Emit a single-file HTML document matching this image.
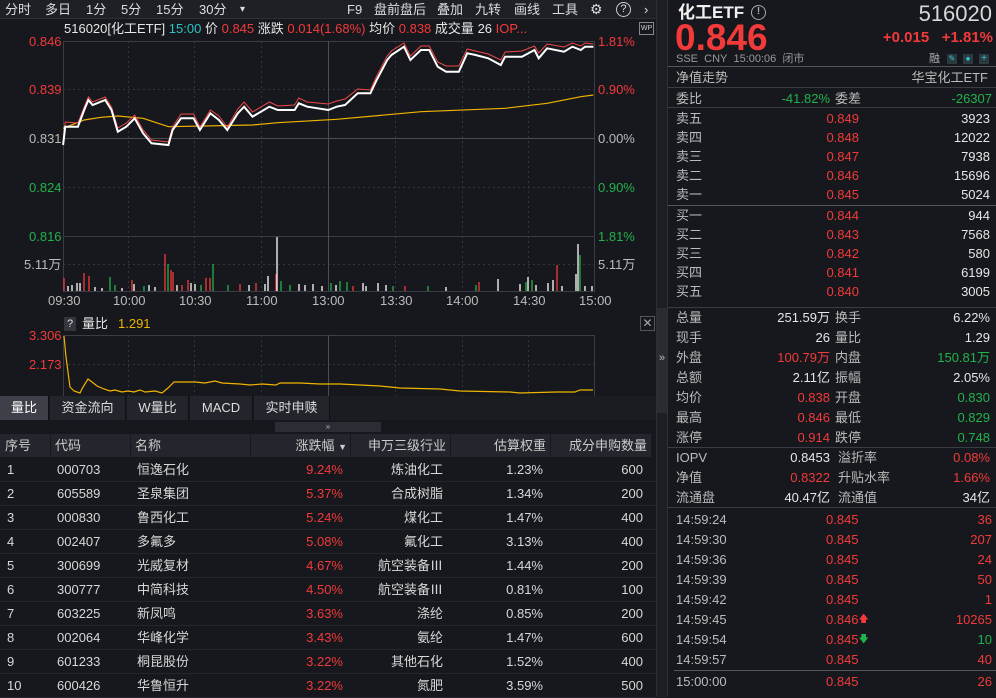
<!DOCTYPE html>
<html><head><meta charset="utf-8">
<style>
*{margin:0;padding:0;box-sizing:border-box}
body{width:996px;height:697px;background:#16181d;font-family:"Liberation Sans","Noto Sans CJK SC",sans-serif;color:#d8d8d8;font-size:13px;line-height:16px;position:relative;overflow:hidden}
.a{position:absolute;white-space:nowrap;line-height:16px}
.r{color:#f23a3a}.g{color:#22b24c}.y{color:#f0b400}.c{color:#2ec4c4}.w{color:#e6e6e6}.gr{color:#bbb}
.top span{position:absolute;top:0;height:19px;line-height:19px;font-size:13px;color:#ddd}
.tab{position:absolute;top:396px;height:24px;line-height:24px;text-align:center;background:#22252b;border-right:1px solid #111;color:#ddd;font-size:13px}
.th{position:absolute;top:434px;height:23px;line-height:23px;color:#ccc;background:#23262c}
.row{position:absolute;left:0;width:656px;height:24px;border-bottom:1px solid #23262c}
.row span{position:absolute;top:0;line-height:24px}
.rp span{position:absolute;line-height:16px;height:16px;white-space:nowrap}
.hl{position:absolute;height:1px;background:#3a3d44}
</style></head><body>
<div class="a" style="left:0;top:0;width:660px;height:19px;background:#1e2026;border-bottom:1px solid #2c2f36"></div>
<div class="top">
<span style="left:5px">分时</span><span style="left:45px">多日</span><span style="left:86px">1分</span><span style="left:121px">5分</span><span style="left:156px">15分</span><span style="left:199px">30分</span><span style="left:240px;font-size:10px">▾</span>
<span style="left:347px">F9</span><span style="left:374px">盘前盘后</span><span style="left:437px">叠加</span><span style="left:475px">九转</span><span style="left:514px">画线</span><span style="left:552px">工具</span>
<span style="left:590px;font-size:14px">⚙</span><span style="left:616px;width:15px;height:15px;top:2px;border:1px solid #ccc;border-radius:50%;line-height:13px;text-align:center;font-size:11px">?</span><span style="left:644px">›</span>
</div>
<div class="a" style="left:64px;top:21px;font-size:13px"><span class="w">516020[化工ETF]</span> <span class="c">15:00</span> <span class="w">价</span> <span class="r">0.845</span> <span class="w">涨跌</span> <span class="r">0.014(1.68%)</span> <span class="w">均价</span> <span class="r">0.838</span> <span class="w">成交量</span> <span class="w">26</span> <span class="r">IOP...</span></div>
<div class="a" style="left:639px;top:22px;width:15px;height:13px;border:1px solid #888;font-size:7px;color:#ccc;text-align:center;line-height:11px">WP</div>
<svg class="a" style="left:0;top:0" width="660" height="312">
<g stroke="#33363d" stroke-width="1" stroke-dasharray="2,3">
<line x1="63" y1="89.5" x2="595" y2="89.5"/><line x1="63" y1="187.5" x2="595" y2="187.5"/><line x1="63" y1="264.5" x2="595" y2="264.5"/>
<line x1="128.5" y1="41" x2="128.5" y2="291"/><line x1="194.5" y1="41" x2="194.5" y2="291"/><line x1="261.5" y1="41" x2="261.5" y2="291"/><line x1="395.5" y1="41" x2="395.5" y2="291"/><line x1="462.5" y1="41" x2="462.5" y2="291"/><line x1="528.5" y1="41" x2="528.5" y2="291"/>
</g>
<g stroke="#3a3d44" stroke-width="1" fill="none">
<rect x="63.5" y="41.5" width="531" height="250"/>
<line x1="63" y1="138.5" x2="595" y2="138.5" stroke="#4a4d55"/><line x1="63" y1="236.5" x2="595" y2="236.5"/>
<line x1="328.5" y1="41" x2="328.5" y2="291" stroke="#4a4d55"/>
</g>
<g stroke-width="1.3">
<line x1="64" y1="291" x2="64" y2="278" stroke="#f23a3a"/><line x1="68" y1="291" x2="68" y2="286" stroke="#fff"/><line x1="72" y1="291" x2="72" y2="285" stroke="#fff"/><line x1="77" y1="291" x2="77" y2="283" stroke="#fff"/><line x1="80" y1="291" x2="80" y2="283" stroke="#fff"/><line x1="84" y1="291" x2="84" y2="273" stroke="#f23a3a"/><line x1="89" y1="291" x2="89" y2="276" stroke="#f23a3a"/><line x1="95" y1="291" x2="95" y2="287" stroke="#fff"/><line x1="102" y1="291" x2="102" y2="288" stroke="#fff"/><line x1="110" y1="291" x2="110" y2="277" stroke="#22b24c"/><line x1="115" y1="291" x2="115" y2="285" stroke="#22b24c"/><line x1="122" y1="291" x2="122" y2="288" stroke="#fff"/><line x1="132" y1="291" x2="132" y2="280" stroke="#f23a3a"/><line x1="134" y1="291" x2="134" y2="284" stroke="#fff"/><line x1="144" y1="291" x2="144" y2="286" stroke="#22b24c"/><line x1="149" y1="291" x2="149" y2="285" stroke="#fff"/><line x1="155" y1="291" x2="155" y2="287" stroke="#fff"/>
<line x1="165" y1="291" x2="165" y2="254" stroke="#f23a3a"/><line x1="168" y1="291" x2="168" y2="264" stroke="#22b24c"/><line x1="171" y1="291" x2="171" y2="270" stroke="#f23a3a"/><line x1="173" y1="291" x2="173" y2="272" stroke="#f23a3a"/><line x1="177" y1="291" x2="177" y2="285" stroke="#fff"/><line x1="182" y1="291" x2="182" y2="285" stroke="#f23a3a"/><line x1="188" y1="291" x2="188" y2="280" stroke="#f23a3a"/><line x1="191" y1="291" x2="191" y2="283" stroke="#fff"/><line x1="195" y1="291" x2="195" y2="284" stroke="#fff"/><line x1="201" y1="291" x2="201" y2="285" stroke="#22b24c"/><line x1="206" y1="291" x2="206" y2="278" stroke="#f23a3a"/><line x1="210" y1="291" x2="210" y2="278" stroke="#f23a3a"/><line x1="213" y1="291" x2="213" y2="264" stroke="#22b24c"/><line x1="228" y1="291" x2="228" y2="285" stroke="#22b24c"/><line x1="240" y1="291" x2="240" y2="284" stroke="#f23a3a"/><line x1="249" y1="291" x2="249" y2="285" stroke="#fff"/><line x1="256" y1="291" x2="256" y2="283" stroke="#f23a3a"/><line x1="265" y1="291" x2="265" y2="284" stroke="#fff"/><line x1="268" y1="291" x2="268" y2="276" stroke="#fff"/><line x1="276" y1="291" x2="276" y2="274" stroke="#f23a3a"/><line x1="277" y1="291" x2="277" y2="237" stroke="#fff"/>
<line x1="281" y1="291" x2="281" y2="281" stroke="#22b24c"/><line x1="290" y1="291" x2="290" y2="285" stroke="#22b24c"/><line x1="299" y1="291" x2="299" y2="284" stroke="#fff"/><line x1="305" y1="291" x2="305" y2="285" stroke="#fff"/><line x1="313" y1="291" x2="313" y2="284" stroke="#fff"/><line x1="322" y1="291" x2="322" y2="286" stroke="#fff"/><line x1="331" y1="291" x2="331" y2="283" stroke="#22b24c"/><line x1="336" y1="291" x2="336" y2="285" stroke="#fff"/><line x1="340" y1="291" x2="340" y2="281" stroke="#22b24c"/><line x1="347" y1="291" x2="347" y2="282" stroke="#22b24c"/><line x1="353" y1="291" x2="353" y2="286" stroke="#f23a3a"/><line x1="363" y1="291" x2="363" y2="283" stroke="#fff"/><line x1="366" y1="291" x2="366" y2="286" stroke="#fff"/><line x1="378" y1="291" x2="378" y2="283" stroke="#fff"/><line x1="386" y1="291" x2="386" y2="285" stroke="#fff"/><line x1="393" y1="291" x2="393" y2="286" stroke="#22b24c"/><line x1="405" y1="291" x2="405" y2="286" stroke="#f23a3a"/><line x1="428" y1="291" x2="428" y2="286" stroke="#22b24c"/><line x1="446" y1="291" x2="446" y2="287" stroke="#fff"/><line x1="476" y1="291" x2="476" y2="285" stroke="#22b24c"/><line x1="479" y1="291" x2="479" y2="282" stroke="#f23a3a"/><line x1="498" y1="291" x2="498" y2="279" stroke="#fff"/><line x1="520" y1="291" x2="520" y2="284" stroke="#fff"/><line x1="526" y1="291" x2="526" y2="282" stroke="#22b24c"/><line x1="528" y1="291" x2="528" y2="277" stroke="#fff"/><line x1="532" y1="291" x2="532" y2="280" stroke="#22b24c"/><line x1="536" y1="291" x2="536" y2="285" stroke="#fff"/><line x1="548" y1="291" x2="548" y2="283" stroke="#fff"/><line x1="553" y1="291" x2="553" y2="280" stroke="#fff"/><line x1="557" y1="291" x2="557" y2="265" stroke="#f23a3a"/><line x1="562" y1="291" x2="562" y2="286" stroke="#fff"/><line x1="576" y1="291" x2="576" y2="274" stroke="#fff"/><line x1="578" y1="291" x2="578" y2="244" stroke="#fff"/><line x1="580" y1="291" x2="580" y2="255" stroke="#22b24c"/><line x1="585" y1="291" x2="585" y2="286" stroke="#fff"/><line x1="592" y1="291" x2="592" y2="286" stroke="#fff"/>
</g>
<polyline fill="none" stroke="#f0b400" stroke-width="1.2" points="63,128.3 84.2,120 101,117.3 117.8,116 143.1,118.3 168.4,126.7 252.5,125 277.8,122.7 336.7,119.3 420.9,111.7 505,108.3 547.1,103.3 580.8,96.7 593.4,95"/>
<polyline fill="none" stroke="#f04848" stroke-width="1" points="63,143 65.2,122 77.9,123 84.2,107 88.4,97 92.6,102 105.2,97 111.5,107 117.8,128 126.3,123 134.7,115 143.1,130 151.5,140 168.4,142 172.6,127 181,114 193.6,114 199.9,127 210.4,110 218.9,116 227.3,127 237.8,109 244.1,102 252.5,112 269.4,102 277.8,106 294.6,105 298.8,98 307.2,102 328.3,104 336.7,101 345.1,99 357.7,89 370.4,90 376.7,76 387.2,56 391.4,51 404,43 410.4,56 420.9,46 429.3,46 437.7,62 446.1,66 458.8,66 467.2,49 475.6,51 488.2,54 500.8,60 505.1,52 521.9,51 534.5,46 538.7,53 547.1,44 564,47 572.4,43 580.8,46 585,43 593.4,44"/>
<polyline fill="none" stroke="#fff" stroke-width="2" points="63.1,145 65.2,126.7 77.9,126.7 84.2,110 88.4,100 92.6,105 105.2,100 111.5,110 117.8,131.7 126.3,126.7 134.7,118.3 143.1,133.3 151.5,143.3 168.4,145 172.6,130 181,118.3 193.6,118.3 199.9,130 210.4,113.3 218.9,120 227.3,130 237.8,113.3 244.1,106.7 252.5,116.7 269.4,106.7 277.8,110 294.6,110 298.8,103.3 307.2,106.7 328.3,110 336.7,106.7 345.1,105 357.7,93.3 370.4,93.3 376.7,80 387.2,60 391.4,55 404,46.7 410.4,60 420.9,50 429.3,50 437.7,66.7 446.1,71.7 458.8,71.7 467.2,53.3 475.6,55 488.2,58.3 500.8,65 505.1,56.7 521.9,56.7 534.5,50 538.7,58.3 547.1,48.3 564,51.7 572.4,46.7 580.8,50 585,46.7 593.4,46.7"/>
<line x1="0" y1="312.5" x2="660" y2="312.5" stroke="#2c2f36"/>
</svg>
<div class="a r" style="left:29px;top:34px">0.846</div>
<div class="a r" style="left:29px;top:82px">0.839</div>
<div class="a gr" style="left:29px;top:131px">0.831</div>
<div class="a g" style="left:29px;top:180px">0.824</div>
<div class="a g" style="left:29px;top:229px">0.816</div>
<div class="a gr" style="left:24px;top:257px">5.11万</div>
<div class="a r" style="left:598px;top:34px">1.81%</div>
<div class="a r" style="left:598px;top:82px">0.90%</div>
<div class="a gr" style="left:598px;top:131px">0.00%</div>
<div class="a g" style="left:598px;top:180px">0.90%</div>
<div class="a g" style="left:598px;top:229px">1.81%</div>
<div class="a gr" style="left:598px;top:257px">5.11万</div>
<div class="a gr" style="left:48px;top:293px">09:30</div><div class="a gr" style="left:113px;top:293px">10:00</div><div class="a gr" style="left:179px;top:293px">10:30</div><div class="a gr" style="left:246px;top:293px">11:00</div><div class="a gr" style="left:312px;top:293px">13:00</div><div class="a gr" style="left:380px;top:293px">13:30</div><div class="a gr" style="left:446px;top:293px">14:00</div><div class="a gr" style="left:513px;top:293px">14:30</div><div class="a gr" style="left:579px;top:293px">15:00</div>
<div class="a" style="left:64px;top:317px;width:12px;height:14px;background:#33363d;color:#ddd;font-size:11px;text-align:center;line-height:14px">?</div>
<div class="a w" style="left:82px;top:316px">量比</div><div class="a y" style="left:118px;top:316px">1.291</div>
<div class="a" style="left:640px;top:316px;width:15px;height:15px;border:1px solid #555;color:#aaa;font-size:12px;text-align:center;line-height:13px">✕</div>
<svg class="a" style="left:0;top:312px" width="660" height="84">
<g stroke="#33363d" stroke-dasharray="2,3"><line x1="63" y1="52.5" x2="595" y2="52.5"/><line x1="128.5" y1="23" x2="128.5" y2="84"/><line x1="194.5" y1="23" x2="194.5" y2="84"/><line x1="261.5" y1="23" x2="261.5" y2="84"/><line x1="395.5" y1="23" x2="395.5" y2="84"/><line x1="462.5" y1="23" x2="462.5" y2="84"/><line x1="528.5" y1="23" x2="528.5" y2="84"/></g>
<g stroke="#3a3d44" fill="none"><line x1="63" y1="23.5" x2="595" y2="23.5"/><line x1="63.5" y1="23" x2="63.5" y2="84"/><line x1="594.5" y1="23" x2="594.5" y2="84"/><line x1="328.5" y1="23" x2="328.5" y2="84" stroke="#4a4d55"/></g>
<polyline fill="none" stroke="#f0b400" stroke-width="1.2" points="64,24 66,45 70,75 74,79 80,81 83,75 88,67 92,70 97,74 104,77 110,79 115,78 122,80 128,79 134,80 140,78 145,80 155,79 162,81 168,76 174,70 182,70 195,70 205,71 215,69 222,71 240,72 250,73 262,72 276,73 280,71 300,71 320,72 340,72 360,73 380,74 400,76 440,77 460,79 510,80 520,81 556,80 575,80 580,78 593,78"/>
</svg>
<div class="a r" style="left:29px;top:328px">3.306</div>
<div class="a r" style="left:29px;top:357px">2.173</div>
<div class="tab" style="left:0;width:49px;background:#3d4048;color:#fff">量比</div>
<div class="tab" style="left:50px;width:76px">资金流向</div>
<div class="tab" style="left:127px;width:62px">W量比</div>
<div class="tab" style="left:190px;width:63px">MACD</div>
<div class="tab" style="left:254px;width:76px">实时申赎</div>
<div class="a" style="left:330px;top:396px;width:326px;height:24px;background:#1a1c21"></div>
<div class="a" style="left:275px;top:422px;width:106px;height:10px;background:#2a2d33;color:#bbb;font-size:8px;text-align:center;line-height:10px">»</div>
<div class="th" style="left:0;width:50px;padding-left:5px">序号</div>
<div class="th" style="left:51px;width:79px;padding-left:4px">代码</div>
<div class="th" style="left:131px;width:119px;padding-left:4px">名称</div>
<div class="th" style="left:251px;width:99px;text-align:right;padding-right:3px">涨跌幅 <span style="font-size:9px">▼</span></div>
<div class="th" style="left:351px;width:99px;text-align:right;padding-right:4px">申万三级行业</div>
<div class="th" style="left:451px;width:99px;text-align:right;padding-right:4px">估算权重</div>
<div class="th" style="left:551px;width:100px;text-align:right;padding-right:4px">成分申购数量</div>
<div class="row" style="top:458px"><span style="left:7px">1</span><span style="left:57px">000703</span><span style="left:137px">恒逸石化</span><span class="r" style="right:313px">9.24%</span><span style="right:213px">炼油化工</span><span style="right:113px">1.23%</span><span style="right:13px">600</span></div>
<div class="row" style="top:482px"><span style="left:7px">2</span><span style="left:57px">605589</span><span style="left:137px">圣泉集团</span><span class="r" style="right:313px">5.37%</span><span style="right:213px">合成树脂</span><span style="right:113px">1.34%</span><span style="right:13px">200</span></div>
<div class="row" style="top:506px"><span style="left:7px">3</span><span style="left:57px">000830</span><span style="left:137px">鲁西化工</span><span class="r" style="right:313px">5.24%</span><span style="right:213px">煤化工</span><span style="right:113px">1.47%</span><span style="right:13px">400</span></div>
<div class="row" style="top:530px"><span style="left:7px">4</span><span style="left:57px">002407</span><span style="left:137px">多氟多</span><span class="r" style="right:313px">5.08%</span><span style="right:213px">氟化工</span><span style="right:113px">3.13%</span><span style="right:13px">400</span></div>
<div class="row" style="top:554px"><span style="left:7px">5</span><span style="left:57px">300699</span><span style="left:137px">光威复材</span><span class="r" style="right:313px">4.67%</span><span style="right:213px">航空装备Ⅲ</span><span style="right:113px">1.44%</span><span style="right:13px">200</span></div>
<div class="row" style="top:578px"><span style="left:7px">6</span><span style="left:57px">300777</span><span style="left:137px">中简科技</span><span class="r" style="right:313px">4.50%</span><span style="right:213px">航空装备Ⅲ</span><span style="right:113px">0.81%</span><span style="right:13px">100</span></div>
<div class="row" style="top:602px"><span style="left:7px">7</span><span style="left:57px">603225</span><span style="left:137px">新凤鸣</span><span class="r" style="right:313px">3.63%</span><span style="right:213px">涤纶</span><span style="right:113px">0.85%</span><span style="right:13px">200</span></div>
<div class="row" style="top:626px"><span style="left:7px">8</span><span style="left:57px">002064</span><span style="left:137px">华峰化学</span><span class="r" style="right:313px">3.43%</span><span style="right:213px">氨纶</span><span style="right:113px">1.47%</span><span style="right:13px">600</span></div>
<div class="row" style="top:650px"><span style="left:7px">9</span><span style="left:57px">601233</span><span style="left:137px">桐昆股份</span><span class="r" style="right:313px">3.22%</span><span style="right:213px">其他石化</span><span style="right:113px">1.52%</span><span style="right:13px">400</span></div>
<div class="row" style="top:674px"><span style="left:7px">10</span><span style="left:57px">600426</span><span style="left:137px">华鲁恒升</span><span class="r" style="right:313px">3.22%</span><span style="right:213px">氮肥</span><span style="right:113px">3.59%</span><span style="right:13px">500</span></div>
<div class="a" style="left:656px;top:0;width:12px;height:697px;background:#1d1f24;border-left:1px solid #2c2f36;border-right:1px solid #2c2f36"></div>
<div class="a" style="left:657px;top:308px;width:10px;height:105px;background:#2a2c31;color:#bbb;font-size:11px;line-height:100px;text-align:center">»</div>
<div class="a" style="left:678px;top:3px;font-size:17px;line-height:20px;font-weight:bold;color:#f0f0f0">化工ETF</div>
<div class="a" style="left:751px;top:5px;width:15px;height:15px;border:1.5px solid #aaa;border-radius:50%;color:#aaa;font-size:10px;text-align:center;line-height:12px;font-weight:bold">!</div>
<div class="a" style="right:4px;top:2px;font-size:22px;line-height:24px;color:#d8d8d8">516020</div>
<div class="a r" style="left:675px;top:21px;font-size:37px;line-height:34px;font-weight:bold">0.846</div>
<div class="a r" style="right:3px;top:29px;font-size:15px;line-height:18px;font-weight:bold">+0.015&nbsp;&nbsp;&nbsp;+1.81%</div>
<div class="a" style="left:676px;top:52px;font-size:11px;line-height:14px;color:#999">SSE&nbsp;&nbsp;CNY&nbsp;&nbsp;15:00:06&nbsp;&nbsp;闭市</div>
<div class="a" style="left:929px;top:52px;font-size:11px;line-height:14px;color:#aaa">融</div>
<div class="a" style="left:947px;top:54px;width:10px;height:10px;background:#2a3a40;color:#3cc;font-size:8px;line-height:10px;text-align:center">✎</div>
<div class="a" style="left:963px;top:54px;width:10px;height:10px;background:#2a3a40;color:#3cc;font-size:8px;line-height:10px;text-align:center">●</div>
<div class="a" style="left:979px;top:54px;width:10px;height:10px;background:#2a3a40;color:#3cc;font-size:10px;line-height:10px;text-align:center">+</div>
<div class="hl" style="left:668px;top:66px;width:328px;background:#555"></div>
<div class="a gr" style="left:676px;top:70px">净值走势</div><div class="a gr" style="right:8px;top:70px">华宝化工ETF</div>
<div class="hl" style="left:668px;top:87px;width:328px"></div>
<div class="a gr" style="left:676px;top:91px">委比</div><div class="a g" style="right:166px;top:91px">-41.82%</div><div class="a gr" style="left:835px;top:91px">委差</div><div class="a g" style="right:4px;top:91px">-26307</div>
<div class="hl" style="left:668px;top:107px;width:328px"></div>
<div class="rp">
<span class="gr" style="left:676px;top:111px">卖五</span><span class="r" style="right:137px;top:111px">0.849</span><span class="w" style="right:6px;top:111px">3923</span>
<span class="gr" style="left:676px;top:130px">卖四</span><span class="r" style="right:137px;top:130px">0.848</span><span class="w" style="right:6px;top:130px">12022</span>
<span class="gr" style="left:676px;top:149px">卖三</span><span class="r" style="right:137px;top:149px">0.847</span><span class="w" style="right:6px;top:149px">7938</span>
<span class="gr" style="left:676px;top:168px">卖二</span><span class="r" style="right:137px;top:168px">0.846</span><span class="w" style="right:6px;top:168px">15696</span>
<span class="gr" style="left:676px;top:187px">卖一</span><span class="r" style="right:137px;top:187px">0.845</span><span class="w" style="right:6px;top:187px">5024</span>
</div>
<div class="hl" style="left:668px;top:205px;width:328px;background:#555"></div>
<div class="rp">
<span class="gr" style="left:676px;top:208px">买一</span><span class="r" style="right:137px;top:208px">0.844</span><span class="w" style="right:6px;top:208px">944</span>
<span class="gr" style="left:676px;top:227px">买二</span><span class="r" style="right:137px;top:227px">0.843</span><span class="w" style="right:6px;top:227px">7568</span>
<span class="gr" style="left:676px;top:246px">买三</span><span class="r" style="right:137px;top:246px">0.842</span><span class="w" style="right:6px;top:246px">580</span>
<span class="gr" style="left:676px;top:265px">买四</span><span class="r" style="right:137px;top:265px">0.841</span><span class="w" style="right:6px;top:265px">6199</span>
<span class="gr" style="left:676px;top:284px">买五</span><span class="r" style="right:137px;top:284px">0.840</span><span class="w" style="right:6px;top:284px">3005</span>
</div>
<div class="hl" style="left:668px;top:307px;width:328px"></div>
<div class="rp">
<span class="gr" style="left:676px;top:310px">总量</span><span class="w" style="right:166px;top:310px">251.59万</span><span class="gr" style="left:835px;top:310px">换手</span><span class="w" style="right:6px;top:310px">6.22%</span>
<span class="gr" style="left:676px;top:330px">现手</span><span class="w" style="right:166px;top:330px">26</span><span class="gr" style="left:835px;top:330px">量比</span><span class="w" style="right:6px;top:330px">1.29</span>
<span class="gr" style="left:676px;top:350px">外盘</span><span class="r" style="right:166px;top:350px">100.79万</span><span class="gr" style="left:835px;top:350px">内盘</span><span class="g" style="right:6px;top:350px">150.81万</span>
<span class="gr" style="left:676px;top:370px">总额</span><span class="w" style="right:166px;top:370px">2.11亿</span><span class="gr" style="left:835px;top:370px">振幅</span><span class="w" style="right:6px;top:370px">2.05%</span>
<span class="gr" style="left:676px;top:390px">均价</span><span class="r" style="right:166px;top:390px">0.838</span><span class="gr" style="left:835px;top:390px">开盘</span><span class="g" style="right:6px;top:390px">0.830</span>
<span class="gr" style="left:676px;top:410px">最高</span><span class="r" style="right:166px;top:410px">0.846</span><span class="gr" style="left:835px;top:410px">最低</span><span class="g" style="right:6px;top:410px">0.829</span>
<span class="gr" style="left:676px;top:430px">涨停</span><span class="r" style="right:166px;top:430px">0.914</span><span class="gr" style="left:835px;top:430px">跌停</span><span class="g" style="right:6px;top:430px">0.748</span>
</div>
<div class="hl" style="left:668px;top:447px;width:328px"></div>
<div class="rp">
<span class="gr" style="left:676px;top:450px">IOPV</span><span class="w" style="right:166px;top:450px">0.8453</span><span class="gr" style="left:838px;top:450px">溢折率</span><span class="r" style="right:6px;top:450px">0.08%</span>
<span class="gr" style="left:676px;top:470px">净值</span><span class="r" style="right:166px;top:470px">0.8322</span><span class="gr" style="left:838px;top:470px">升贴水率</span><span class="r" style="right:6px;top:470px">1.66%</span>
<span class="gr" style="left:676px;top:490px">流通盘</span><span class="w" style="right:166px;top:490px">40.47亿</span><span class="gr" style="left:838px;top:490px">流通值</span><span class="w" style="right:6px;top:490px">34亿</span>
</div>
<div class="hl" style="left:668px;top:507px;width:328px"></div>
<div class="rp">
<span class="gr" style="left:676px;top:512px">14:59:24</span><span class="r" style="left:826px;top:512px">0.845</span><span class="r" style="right:4px;top:512px">36</span>
<span class="gr" style="left:676px;top:532px">14:59:30</span><span class="r" style="left:826px;top:532px">0.845</span><span class="r" style="right:4px;top:532px">207</span>
<span class="gr" style="left:676px;top:552px">14:59:36</span><span class="r" style="left:826px;top:552px">0.845</span><span class="r" style="right:4px;top:552px">24</span>
<span class="gr" style="left:676px;top:572px">14:59:39</span><span class="r" style="left:826px;top:572px">0.845</span><span class="r" style="right:4px;top:572px">50</span>
<span class="gr" style="left:676px;top:592px">14:59:42</span><span class="r" style="left:826px;top:592px">0.845</span><span class="r" style="right:4px;top:592px">1</span>
<span class="gr" style="left:676px;top:612px">14:59:45</span><span class="r" style="left:826px;top:612px">0.846<span style="font-size:10px"> 🡅</span></span><span class="r" style="right:4px;top:612px">10265</span>
<span class="gr" style="left:676px;top:632px">14:59:54</span><span class="r" style="left:826px;top:632px">0.845<span class="g" style="font-size:10px"> 🡇</span></span><span class="g" style="right:4px;top:632px">10</span>
<span class="gr" style="left:676px;top:652px">14:59:57</span><span class="r" style="left:826px;top:652px">0.845</span><span class="r" style="right:4px;top:652px">40</span>
</div>
<div class="hl" style="left:674px;top:670px;width:322px;background:#555"></div>
<div class="rp"><span class="gr" style="left:676px;top:674px">15:00:00</span><span class="r" style="left:826px;top:674px">0.845</span><span class="r" style="right:4px;top:674px">26</span></div>
</body></html>
